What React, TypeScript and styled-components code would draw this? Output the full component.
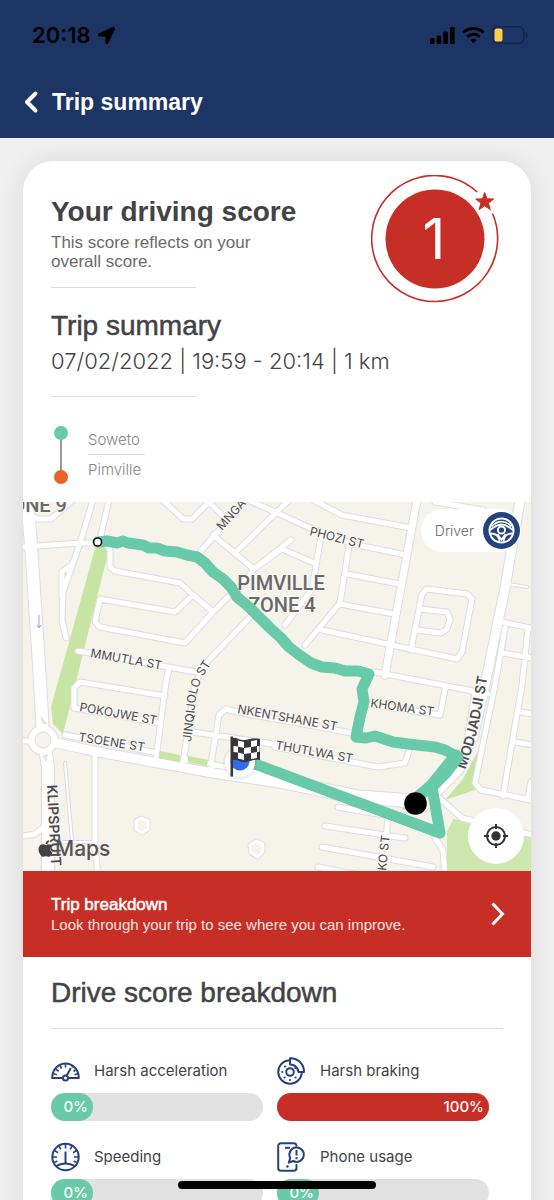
import React from 'react';
import styled, { createGlobalStyle } from 'styled-components';
import { FaApple, FaLocationArrow } from 'react-icons/fa';

const color = {
  navy: '#1c3564',
  brand: '#23427f',
  red: '#c72e26',
  green: '#68caa8',
  orange: '#e8622a',
  ink: '#434244',
  muted: '#6a6a6b',
  faint: '#858586',
  rule: '#dcdcdc',
  track: '#e1e1e1',
};

const sans = '"Liberation Sans", Arial, sans-serif';
const ui = 'Inter, Roboto, sans-serif';

const GlobalStyle = createGlobalStyle`
  * { box-sizing: border-box; }
  body { margin: 0; background: #efefef; font-family: ${sans}; color: ${color.ink}; }
  h1, h2, h3, p { margin: 0; font-weight: 400; }
  button { font: inherit; color: inherit; border: 0; padding: 0; background: none; cursor: pointer; }
  svg { display: block; }
`;

const Screen = styled.div`
  display: flex;
  flex-direction: column;
  height: 100vh;
  overflow: hidden;
`;

const TopBar = styled.header`
  flex: none;
  background: ${color.navy};
`;

const StatusBar = styled.div`
  display: flex;
  justify-content: space-between;
  align-items: center;
  height: 70px;
  padding: 0 26px 0 32px;
  color: #000;
`;

const StatusGroup = styled.div`
  display: flex;
  align-items: center;
  gap: 7px;
`;

const Clock = styled.span`
  font: 600 22px/28px ${ui};
`;

const NavBar = styled.div`
  display: flex;
  align-items: center;
  gap: 12px;
  height: 68px;
  padding: 0 24px 4px;
  color: #fff;
`;

const NavTitle = styled.h1`
  font: 700 23px/28px ${sans};
`;

const Content = styled.main`
  flex: 1;
  min-height: 0;
  overflow-y: auto;
  scrollbar-width: none;
  padding: 23px 23px 0;
`;

const Card = styled.article`
  background: #fff;
  border-radius: 30px 30px 0 0;
  box-shadow: 0 0 24px rgba(0, 0, 0, 0.09);
  min-height: 100%;
`;

const Summary = styled.section`
  padding: 14px 32px 0 28px;
`;

const ScoreRow = styled.div`
  display: flex;
  justify-content: space-between;
  align-items: flex-start;
  margin-bottom: 6px;
`;

const ScoreText = styled.div`
  padding-top: 17px;
`;

const ScoreTitle = styled.h2`
  font: 700 28px/40px ${sans};
`;

const ScoreNote = styled.p`
  max-width: 230px;
  margin-bottom: 16px;
  font-size: 17px;
  line-height: 19px;
  padding-top: 1px;
  color: ${color.muted};
`;

const ShortRule = styled.hr`
  width: 145px;
  height: 1px;
  margin: 0;
  border: 0;
  background: ${color.rule};
`;

const SectionTitle = styled.h2`
  font: 400 28px/34px ${sans};
  -webkit-text-stroke: 0.5px currentColor;
`;

const TripMeta = styled.p`
  margin: 1px 0 18px;
  font: 300 22px/34px ${ui};
`;

const Places = styled.div`
  display: flex;
  gap: 20px;
  padding: 28px 0 18px 3px;
`;

const PlaceList = styled.ul`
  list-style: none;
  margin: 0;
  padding: 0;
  font: 300 15px/29px ${ui};
  color: ${color.faint};
`;

const Place = styled.li`
  min-width: 57px;
  & + & { border-top: 1px solid ${color.rule}; }
`;

const MapFrame = styled.section`
  position: relative;
  overflow: hidden;
`;

const MapCanvas = styled.svg`
  width: 100%;
  height: auto;
`;

const DriverButton = styled.button`
  position: absolute;
  top: 7px;
  right: 10px;
  display: flex;
  align-items: center;
  gap: 9px;
  height: 43px;
  padding: 0 0 0 14px;
  border-radius: 22px;
  background: #fff;
  font: 300 14px/20px ${ui};
  color: ${color.muted};
`;

const LocateButton = styled.button`
  position: absolute;
  right: 7px;
  bottom: 7px;
  display: grid;
  place-items: center;
  width: 56px;
  height: 56px;
  border-radius: 50%;
  background: #fff;
`;

const Banner = styled.button`
  display: flex;
  justify-content: space-between;
  align-items: center;
  width: 100%;
  height: 86px;
  padding: 0 26px 0 28px;
  background: ${color.red};
  color: #fff;
  text-align: left;
`;

const BannerText = styled.span`
  display: flex;
  flex-direction: column;
  padding-top: 1px;
  font-size: 15px;
  line-height: 20px;
`;

const BannerTitle = styled.span`
  font-size: 17px;
  -webkit-text-stroke: 0.5px currentColor;
`;

const BannerNote = styled.span`
  color: #ffe3e0;
`;

const Breakdown = styled.section`
  padding: 19px 28px 24px;
`;

const LongRule = styled(ShortRule)`
  width: 100%;
  margin-top: 18px;
`;

const Metrics = styled.div`
  display: grid;
  grid-template-columns: 1fr 1fr;
  row-gap: 21px;
  padding-top: 27px;
`;

const Metric = styled.div`
  padding-right: 14px;
`;

const MetricLabel = styled.h3`
  display: flex;
  align-items: center;
  gap: 14px;
  height: 30px;
  margin-bottom: 7px;
  font: 400 15px/20px ${ui};
`;

const Track = styled.div`
  height: 28px;
  border-radius: 14px;
  background: ${color.track};
`;

const Fill = styled.div<{ $tone: string }>`
  display: flex;
  align-items: center;
  justify-content: flex-end;
  min-width: 42px;
  height: 28px;
  padding-right: 5px;
  border-radius: 14px;
  background: ${(p) => p.$tone};
  color: #fff;
  font: 500 15px/20px ${ui};
`;

const HomeIndicator = styled.div`
  position: fixed;
  bottom: 11px;
  left: 50%;
  width: 198px;
  height: 8px;
  margin-left: -99px;
  border-radius: 4px;
  background: #000;
`;

const Signal = () => (
  <svg width="25" height="17" viewBox="0 0 25 17" aria-hidden="true">
    <rect x="0" y="11" width="4.6" height="6" rx="1.2" />
    <rect x="6.7" y="8.5" width="4.6" height="8.5" rx="1.2" />
    <rect x="13.3" y="4.5" width="4.6" height="12.5" rx="1.2" />
    <rect x="20" y="0" width="4.6" height="17" rx="1.2" />
  </svg>
);

const Wifi = () => (
  <svg width="23" height="18" viewBox="0 0 23 18" fill="none" stroke="#000" strokeWidth="3" aria-hidden="true">
    <path d="M1.3 6.6a14.6 14.6 0 0 1 20.4 0" />
    <path d="M5.2 10.9a9 9 0 0 1 12.6 0" />
    <path d="M11.5 17.2l-3-3.2a4.3 4.3 0 0 1 6 0z" fill="#000" stroke="none" />
  </svg>
);

const Battery = () => (
  <svg width="36" height="18" viewBox="0 0 36 18" aria-hidden="true">
    <rect x="0.8" y="0.8" width="31" height="16.4" rx="5" fill="none" stroke="#13244a" strokeWidth="1.4" />
    <path d="M33.6 6v6c1.2-.5 1.9-1.6 1.9-3s-.7-2.5-1.9-3z" fill="#13244a" />
    <rect x="2.5" y="2.5" width="8" height="13" rx="2.6" fill="#fdd046" />
  </svg>
);

const Back = () => (
  <svg width="16" height="24" viewBox="0 0 16 24" fill="none" stroke="#fff" strokeWidth="4" strokeLinecap="round" strokeLinejoin="round" aria-hidden="true">
    <path d="M11.5 3.5L3 12l8.5 8.5" />
  </svg>
);

const ScoreRing = () => (
  <svg width="128" height="128" viewBox="0 0 128 128" role="img" aria-label="Score 1">
    <path d="M106.2 17A63 63 0 1 0 121.5 38.5" fill="none" stroke={color.red} strokeWidth="1.6" />
    <circle cx="64" cy="64" r="49.5" fill={color.red} />
    <path d="M113.7 17.5l2.3 6.3 6.7.2-5.3 4.1 1.9 6.5-5.6-3.8-5.6 3.8 1.9-6.5-5.3-4.1 6.7-.2z" fill={color.red} stroke={color.red} strokeWidth="1" strokeLinejoin="round" />
    <text x="63" y="84" textAnchor="middle" fontFamily={ui} fontWeight="400" fontSize="56" fill="#fff">1</text>
  </svg>
);

const Connector = () => (
  <svg width="14" height="59" viewBox="0 0 14 59" aria-hidden="true">
    <path d="M7 8v44" stroke="#7a7a7a" strokeWidth="1.5" />
    <circle cx="7" cy="8" r="7" fill={color.green} />
    <circle cx="7" cy="52" r="7" fill={color.orange} />
  </svg>
);

const SteeringWheel = () => (
  <svg width="38" height="43" viewBox="0 0 38 43" fill="none" stroke="#fff" aria-hidden="true">
    <circle cx="18.5" cy="21.5" r="18.5" fill={color.brand} stroke="none" />
    <circle cx="18.5" cy="21.5" r="12" strokeWidth="2" />
    <path d="M8.5 17.5c6-6.5 14-6.5 20 0" strokeWidth="1.8" />
    <path d="M7 21c4-2.5 6-5.5 11.5-5.5S26 18.5 30 21" strokeWidth="1.8" />
    <circle cx="18.5" cy="21" r="3.6" strokeWidth="2" />
    <path d="M8 24.5c5 0 8 3 8.5 8M29 24.5c-5 0-8 3-8.5 8M14.5 25l4 6 4-6" strokeWidth="1.8" />
  </svg>
);

const Locate = () => (
  <svg width="26" height="26" viewBox="0 0 26 26" fill="none" stroke="#333" strokeWidth="2" aria-hidden="true">
    <circle cx="13" cy="13" r="9" />
    <circle cx="13" cy="13" r="4.7" fill="#333" stroke="none" />
    <path d="M13 1v5M13 20v5M1 13h5M20 13h5" />
  </svg>
);

const Forward = () => (
  <svg width="14" height="24" viewBox="0 0 14 24" fill="none" stroke="#fff" strokeWidth="3" strokeLinecap="square" aria-hidden="true">
    <path d="M2.5 2.5L11.5 12l-9 9.5" />
  </svg>
);

const iconProps = {
  width: 29,
  height: 30,
  viewBox: '0 0 29 30',
  fill: 'none',
  stroke: color.brand,
  strokeWidth: 2,
  'aria-hidden': true,
} as const;

const AccelerationIcon = () => (
  <svg {...iconProps}>
    <path d="M11.5 22H1.2C1.2 14 7 7.5 14.5 7.5S27.8 14 27.8 22H17.5" strokeLinejoin="round" />
    <circle cx="14.5" cy="22" r="2.5" />
    <path d="M15.8 19.5L19.8 12" />
    <path d="M14.5 8v3.5M9 9.5l1.6 3M5 13.3l2.6 2M2.8 17.8l3 1M21.8 9.8l-.8 1.5M24.5 14l-2 1.5M26.5 17.8l-3 1" strokeWidth="1.6" />
  </svg>
);

const SpeedIcon = () => (
  <svg {...iconProps}>
    <circle cx="14.5" cy="15" r="13.2" />
    <path d="M14.5 9.5V22" />
    <path d="M5 24.2c5.5-3.6 13.5-3.6 19 0" />
    <path d="M14.5 2v4.5M8 3.8l1.7 3.5M3.5 8.5l3.5 2.2M1.5 15H6M3.3 20.5l3-1.5M21 3.8l-1.7 3.5M25.5 8.5L22 10.7M27.5 15H23M25.7 20.5l-3-1.5" strokeWidth="1.6" />
  </svg>
);

const BrakeIcon = () => (
  <svg {...iconProps}>
    <path d="M12 4.2A11.8 11.8 0 1 0 24.8 17" />
    <circle cx="13" cy="16" r="3.8" />
    <path d="M13 2.2A13.5 13.5 0 0 1 27 16h-5.6A8 8 0 0 0 13 8.5z" strokeLinejoin="round" />
    <g fill={color.brand} stroke="none">
      <circle cx="8" cy="10.5" r="1.1" />
      <circle cx="5.2" cy="16" r="1.1" />
      <circle cx="7.5" cy="21.5" r="1.1" />
      <circle cx="13" cy="24" r="1.1" />
      <circle cx="18.5" cy="21.5" r="1.1" />
      <circle cx="18.3" cy="12" r="1.1" />
    </g>
  </svg>
);

const PhoneIcon = () => (
  <svg {...iconProps}>
    <path d="M19.5 3.8a2.8 2.8 0 0 0-2.8-2.6H4A2.8 2.8 0 0 0 1.2 4v22A2.8 2.8 0 0 0 4 28.8h12.7a2.8 2.8 0 0 0 2.8-2.8v-3" strokeLinecap="round" />
    <path d="M8 5.8h5" />
    <path d="M11.8 20.6l1.4-4.6a7.2 7.2 0 1 1 3 3z" strokeLinejoin="round" />
    <path d="M19.5 8v5.4M19.5 15v2.2" />
    <circle cx="10.5" cy="24.5" r="1.2" fill={color.brand} stroke="none" />
  </svg>
);

/* Street centre lines grouped by width. */
const roads: { width: number; paths: string[] }[] = [
  { width: 2, paths: ['M42 261L49 338', 'M485 82L504 85', 'M40 340H70'] },
  {
    width: 5,
    paths: [
      'M0 45L57 41L74 41',
      'M70 -2L57 41L40 90L39 118L43 136',
      'M50 62L39 70L39 95',
      'M86 -2L78 33L87 48L87 65L92 69L157 81L170 93L190 110L212 88',
      'M170 93L152 110L77 97L72 120L77 125L162 141L190 110',
      'M55 149L173 170',
      'M146 166L143 180L133 256',
      'M51 206L51 186L57 180L142 194',
      'M51 206L137 221',
      'M42 233L130 250',
      'M230 112L184 160L172 182L160 261',
      'M170 230L257 243',
      'M313 228L214 210L203 207L196 213L187 268',
      'M312 228L334 232',
      'M252 245L329 260L355 265L382 261L387 246',
      'M345 202L417 213L422 188',
      'M140 -2L160 17L169 17L186 0L202 16',
      'M222 -2L177 50',
      'M190 33L231 67L213 90',
      'M231 67L268 38',
      'M212 51L266 -2',
      'M290 -2L319 13L388 26',
      'M250 9L287 26L330 42L383 53',
      'M225 -2L252 10',
      'M326 44L317 101L282 143',
      'M324 72L377 82',
      'M317 102L371 112',
      'M299 128L434 157L439 150L449 97L444 92L404 87L399 92L388 148',
      'M397 107L424 110L427 117L424 127L418 131L394 128',
      'M352 170L465 192',
      'M231 67L259 47L291 61',
      'M298 34L289 87L262 123',
      'M412 0L460 8',
      'M482 126L472 183L452 281L458 288L508 298',
      'M480 151L508 156',
      'M479 120L512 127',
      'M505 126L499 183L480 294',
      'M498 210L510 212',
      'M492 240L510 243',
      'M508 280L505 296',
      'M452 191L444 238',
      'M0 239H20',
      'M0 334L12 332L25 322',
      'M72 251L72 345L75 373',
      'M315 305L372 315',
      'M365 314L363 340',
      'M302 324L382 336',
      'M299 345L410 365',
      'M295 365L352 376',
      'M415 295L439 316L455 320L510 333',
      'M412 336L420 348L422 375',
      'M0 8L14 17L28 17L52 -4',
      'M160 257L252 274L335 291L392 295',
    ],
  },
  { width: 7, paths: ['M394 -2L362 173', 'M392 295L415 290L437 268L450 236'] },
  { width: 9, paths: ['M20 238L70 249L184 270L257 281L319 294L395 302', 'M497 -2L482 86L463 178L450 236'] },
  { width: 12, paths: ['M4 -4L8 43L17 178L20 234L25 265L25 375'] },
];

const labels: { text: string; x: number; y: number; angle: number; strong?: boolean }[] = [
  { text: 'MMUTLA ST', x: 67, y: 155, angle: 10 },
  { text: 'PHOZI ST', x: 286, y: 33, angle: 14 },
  { text: 'MNGA', x: 199, y: 29, angle: -48 },
  { text: 'POKOJWE ST', x: 56, y: 209, angle: 10 },
  { text: 'TSOENE ST', x: 55, y: 239, angle: 9 },
  { text: 'NKENTSHANE ST', x: 214, y: 211, angle: 10 },
  { text: 'THUTLWA ST', x: 252, y: 247, angle: 10 },
  { text: 'KHOMA ST', x: 347, y: 205, angle: 8 },
  { text: 'KO ST', x: 363, y: 369, angle: -84 },
  { text: 'KLIPSPRUIT', x: 24, y: 283, angle: 87, strong: true },
];

const trail =
  'M75 40L84 39L94 41L100 39L105 41L120 43L126 46L134 46L142 49L154 50L164 53L174 55L182 61L190 70L200 77L208 85L214 95L226 105L236 115L246 125L258 136L266 145L275 152L288 161L299 165L312 166L322 169L335 169L346 172L339 187L341 200L337 215L333 235L343 236L352 234L370 240L385 242L412 245L422 248L435 255L424 270L409 285L417 331L224 259';

const TripMap = () => (
  <MapCanvas viewBox="0 0 508 369" role="img" aria-label="Trip route from Soweto to Pimville">
    <rect width="508" height="369" fill="#f6f3eb" />
    <g fill="#c6e5a2">
      <path d="M73 43H87L40 232L30 222L28 205Z" />
      <path d="M457 245L452 288L422 298L440 277Z" />
      <path d="M378 307L392 300L396 312Z" />
    </g>
    <path d="M430 317L455 320L508 333V369H424V330Z" fill="#cde7ae" />
    <path d="M475 130L471 150" stroke="#d7e8c0" strokeWidth="3" />
    {roads.map((g) => (
      <path key={g.width} d={g.paths.join('')} fill="none" stroke="#dddce1" strokeWidth={g.width + 2} strokeLinecap="round" strokeLinejoin="round" />
    ))}
    <circle cx="20" cy="238" r="11" fill="none" stroke="#dddce1" strokeWidth="9" />
    {roads.map((g) => (
      <path key={g.width} d={g.paths.join('')} fill="none" stroke="#fff" strokeWidth={g.width} strokeLinecap="round" strokeLinejoin="round" />
    ))}
    <g fill="#c6e5a2">
      <path d="M137 249L157 253L156 260L136 256Z" />
      <path d="M165 254L185 258L184 264L165 260Z" />
    </g>
    <circle cx="20" cy="238" r="11" fill="none" stroke="#fff" strokeWidth="7" />
    <circle cx="20" cy="238" r="8" fill="#f6f3eb" stroke="#dddce1" />
    <path d="M18 215l2 6 4 1zM20 254l4-1-1 6z" fill="#f6f3eb" stroke="#dddce1" />
    <g fill="#f6f3eb" stroke="#dddce1" strokeWidth="5" strokeLinejoin="round">
      <path d="M113 319l5-3 7 3v8l-6 4-6-4z" />
      <path d="M227 343l6-4 7 3v7l-5 6-7-4z" />
    </g>
    <g fill="#f6f3eb" stroke="#fff" strokeWidth="3" strokeLinejoin="round">
      <path d="M113 319l5-3 7 3v8l-6 4-6-4z" />
      <path d="M227 343l6-4 7 3v7l-5 6-7-4z" />
    </g>
    <path d="M16 113v13m-2-3l2 3 2-3" fill="none" stroke="#a3a7b0" />
    <g fontFamily={ui} fontSize="12" fill="#4c4c4f" stroke="#faf8f3" strokeWidth="2" paintOrder="stroke">
      {labels.map((l) => (
        <text key={l.text} x={l.x} y={l.y} fontSize={l.strong ? 14 : 12} fontWeight={l.strong ? 600 : 400} transform={`rotate(${l.angle} ${l.x} ${l.y})`}>
          {l.text}
        </text>
      ))}
      <path id="jinqijolo" d="M168 240L173 196Q175 184 181 173L196 150" fill="none" stroke="none" />
      <text>
        <textPath href="#jinqijolo">JINQIJOLO ST</textPath>
      </text>
      <path id="modjadji" d="M442 268Q454 235 458 210L471 140" fill="none" stroke="none" />
      <text fontSize="14" fontWeight="600">
        <textPath href="#modjadji">MODJADJI ST</textPath>
      </text>
    </g>
    <g fontFamily="Roboto, sans-serif" fontWeight="500" fontSize="20" fill="#69696b" stroke="#faf8f3" strokeWidth="2" paintOrder="stroke">
      <text x="258" y="88" textAnchor="middle">PIMVILLE</text>
      <text x="259" y="110" textAnchor="middle">ZONE 4</text>
      <text x="44" y="10" textAnchor="end">ZONE 9</text>
    </g>
    <g fill="#555">
      <FaApple x="13" y="337" size="19" />
      <text x="32" y="354" fontFamily={ui} fontSize="21" fontWeight="500">Maps</text>
    </g>
    <path d={trail} fill="none" stroke={color.green} strokeWidth="11" strokeLinejoin="round" strokeLinecap="round" />
    <path d="M433 254L407 286" stroke={color.green} strokeWidth="13" strokeLinecap="round" />
    <path d="M409 283L396 294" stroke={color.green} strokeWidth="12" strokeLinecap="round" />
    <circle cx="217" cy="261" r="17" fill="#000" opacity="0.06" />
    <circle cx="217" cy="260" r="15" fill="#fff" />
    <circle cx="217" cy="259" r="9.5" fill="#2d6bf0" />
    <path d="M207.5 234.500h2.400l.2 40h-2.600z" fill="#3a3536" />
    <path d="M209 236c5-1 8 3 13 2s8-2 15-1v21c-6-1-9 1-14 2s-8-3-14-2z" fill="#3a3536" />
    <g fill="#fff">
      <path d="M215 238.500l6 1.500v6l-6-1.500zM228 239l6-1v6l-6 1z" />
      <path d="M210.500 244l4.500.5v6l-4.500-.5zM221 246l7-1v6l-7 1z" />
      <path d="M215 250.500l6 1.500v6l-6-1.500zM228 251l6-1v6l-6 1zM234 244l2.500-.3v6l-2.500.3z" />
    </g>
    <circle cx="392.5" cy="301.5" r="11.3" />
    <circle cx="74.6" cy="40" r="4" fill="#fff" stroke="#111" strokeWidth="1.6" />
  </MapCanvas>
);

const metrics = [
  { name: 'Harsh acceleration', value: 0, icon: <AccelerationIcon /> },
  { name: 'Harsh braking', value: 100, icon: <BrakeIcon /> },
  { name: 'Speeding', value: 0, icon: <SpeedIcon /> },
  { name: 'Phone usage', value: 0, icon: <PhoneIcon /> },
];

export default function App() {
  return (
    <Screen>
      <GlobalStyle />
      <TopBar>
        <StatusBar>
          <StatusGroup>
            <Clock>20:18</Clock>
            <FaLocationArrow size={17} />
          </StatusGroup>
          <StatusGroup>
            <Signal />
            <Wifi />
            <Battery />
          </StatusGroup>
        </StatusBar>
        <NavBar>
          <button type="button" aria-label="Back">
            <Back />
          </button>
          <NavTitle>Trip summary</NavTitle>
        </NavBar>
      </TopBar>
      <Content>
        <Card>
          <Summary>
            <ScoreRow>
              <ScoreText>
                <ScoreTitle>Your driving score</ScoreTitle>
                <ScoreNote>This score reflects on your overall score.</ScoreNote>
                <ShortRule />
              </ScoreText>
              <ScoreRing />
            </ScoreRow>
            <SectionTitle>Trip summary</SectionTitle>
            <TripMeta>07/02/2022 | 19:59 - 20:14 | 1 km</TripMeta>
            <ShortRule />
            <Places>
              <Connector />
              <PlaceList>
                <Place>Soweto</Place>
                <Place>Pimville</Place>
              </PlaceList>
            </Places>
          </Summary>
          <MapFrame>
            <TripMap />
            <DriverButton type="button">
              Driver
              <SteeringWheel />
            </DriverButton>
            <LocateButton type="button" aria-label="Show my location">
              <Locate />
            </LocateButton>
          </MapFrame>
          <Banner type="button">
            <BannerText>
              <BannerTitle>Trip breakdown</BannerTitle>
              <BannerNote>Look through your trip to see where you can improve.</BannerNote>
            </BannerText>
            <Forward />
          </Banner>
          <Breakdown>
            <SectionTitle>Drive score breakdown</SectionTitle>
            <LongRule />
            <Metrics>
              {metrics.map((m) => (
                <Metric key={m.name}>
                  <MetricLabel>
                    {m.icon}
                    {m.name}
                  </MetricLabel>
                  <Track>
                    <Fill $tone={m.value > 50 ? color.red : color.green} style={{ width: `${m.value}%` }}>
                      {m.value}%
                    </Fill>
                  </Track>
                </Metric>
              ))}
            </Metrics>
          </Breakdown>
        </Card>
      </Content>
      <HomeIndicator />
    </Screen>
  );
}
